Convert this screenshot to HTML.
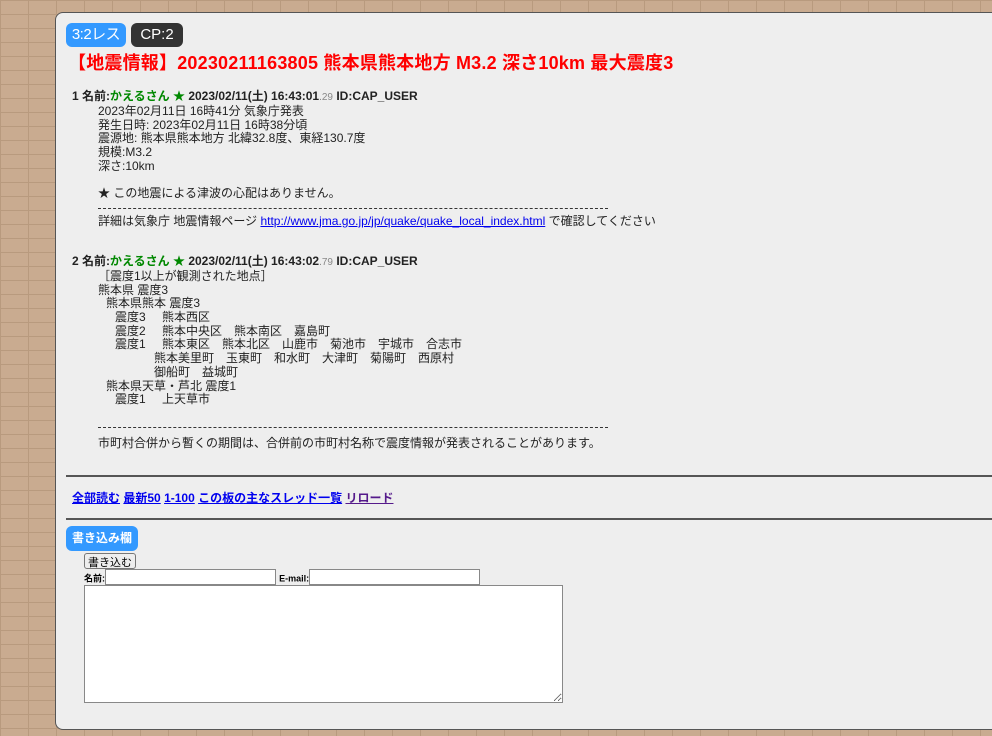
<!DOCTYPE html>
<html><head><meta charset="utf-8">
<style>
body{margin:0;width:992px;height:736px;overflow:hidden;font-family:"Liberation Sans","Noto Sans CJK JP",sans-serif;
background-color:#c9ab90;
background-image:linear-gradient(#b89a7e 1px,transparent 1px),linear-gradient(90deg,#b89a7e 1px,transparent 1px);
background-size:28px 14px;}
.panel{position:absolute;left:55px;top:12px;width:960px;height:716px;background:#eeeeee;border:1px solid #555;border-radius:8px;}
.badge{position:absolute;top:10px;height:24px;line-height:24px;font-size:15px;color:#fff;border-radius:6px;padding:0 8px;}
.title{position:absolute;left:12px;top:36px;font-size:18px;font-weight:bold;color:#f00;white-space:nowrap;letter-spacing:0.2px;}
.post{position:absolute;left:16px;font-size:12px;color:#222;}
.hd{font-weight:bold;font-size:12px;line-height:14px;}
.hd .n{color:#080;}
.hd small{color:#888;font-size:10px;font-weight:normal}
.body{margin-left:26px;line-height:13.7px;white-space:pre;font-size:12px;}
.dash{display:block;width:510px;height:7px;border-bottom:1px dashed #333;margin-bottom:6px}
.l{display:block;height:13.7px}
.lb{display:inline-block;width:47px}
a{color:#00e;}
hr{position:absolute;left:10px;width:950px;margin:0;border:0;border-top:2px solid #555;}
.links{position:absolute;left:16px;top:476px;font-size:12px;font-weight:bold;}
input[type=text]{height:14px;border:1px solid #888;padding:0;}
</style></head><body>
<div class="panel">
<div class="badge" style="left:10px;width:60px;padding:0;text-align:center;background:#3399ff;letter-spacing:-0.5px">3:2レス</div>
<div class="badge" style="left:75px;width:52px;padding:0;text-align:center;background:#333">CP:2</div>
<div class="title">【地震情報】20230211163805 熊本県熊本地方 M3.2 深さ10km 最大震度3</div>
<div class="post" style="top:76px">
<div class="hd">1 名前:<span class="n">かえるさん ★</span> 2023/02/11(土) 16:43:01<small>.29</small> ID:CAP_USER</div>
<div class="body">2023年02月11日 16時41分 気象庁発表
発生日時: 2023年02月11日 16時38分頃
震源地: 熊本県熊本地方 北緯32.8度、東経130.7度
規模:M3.2
深さ:10km

★ この地震による津波の心配はありません。
<span class="dash"></span>詳細は気象庁 地震情報ページ <a href="#">http://www.jma.go.jp/jp/quake/quake_local_index.html</a> で確認してください</div>
</div>
<div class="post" style="top:241px">
<div class="hd">2 名前:<span class="n">かえるさん ★</span> 2023/02/11(土) 16:43:02<small>.79</small> ID:CAP_USER</div>
<div class="body"><span class="l">［震度1以上が観測された地点］</span><span class="l">熊本県 震度3</span><span class="l" style="padding-left:8px">熊本県熊本 震度3</span><span class="l" style="padding-left:17px"><span class="lb">震度3</span>熊本西区</span><span class="l" style="padding-left:17px"><span class="lb">震度2</span>熊本中央区　熊本南区　嘉島町</span><span class="l" style="padding-left:17px"><span class="lb">震度1</span>熊本東区　熊本北区　山鹿市　菊池市　宇城市　合志市</span><span class="l" style="padding-left:56px">熊本美里町　玉東町　和水町　大津町　菊陽町　西原村</span><span class="l" style="padding-left:56px">御船町　益城町</span><span class="l" style="padding-left:8px">熊本県天草・芦北 震度1</span><span class="l" style="padding-left:17px"><span class="lb">震度1</span>上天草市</span><span class="l"></span><span class="dash" style="margin-top:-1px;margin-bottom:9px"></span>市町村合併から暫くの期間は、合併前の市町村名称で震度情報が発表されることがあります。</div>
</div>
<hr style="top:462px">
<div class="links"><a href="#">全部読む</a> <a href="#">最新50</a> <a href="#">1-100</a> <a href="#">この板の主なスレッド一覧</a> <a href="#" style="color:#551a8b">リロード</a></div>
<hr style="top:505px">
<div class="badge" style="left:10px;top:513px;font-size:12px;font-weight:bold;height:25px;line-height:25px;padding:0 6px;background:#3399ff">書き込み欄</div>
<div style="position:absolute;left:28px;top:540px;font-size:11px;">
<button style="font-size:11px;padding:0 3px;height:16px;border:1px solid #777;border-radius:3px;background:#eee">書き込む</button><br>
<b style="font-size:9px">名前:</b><input type="text" style="width:169px"> <b style="font-size:9px">E-mail:</b><input type="text" style="width:169px"><br>
<textarea style="width:477px;height:116px;border:1px solid #888;padding:0;margin:0;resize:both"></textarea>
</div>
</div>
</body></html>
